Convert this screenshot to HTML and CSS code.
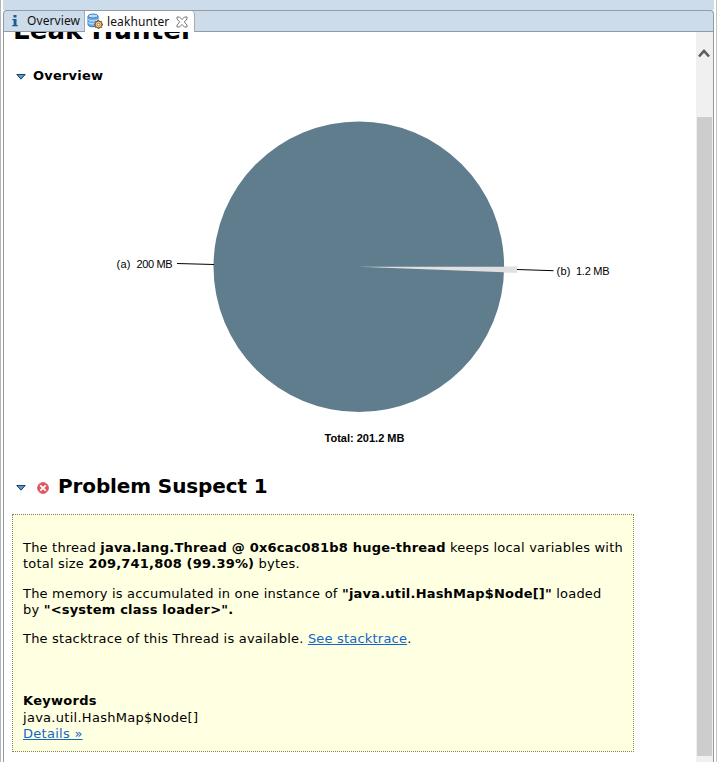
FILE: index.html
```
<!DOCTYPE html>
<html lang="en">
<head>
<meta charset="utf-8">
<title>leakhunter</title>
<link rel="stylesheet" href="styles.css">
</head>
<body>
<div class="workbench">
  <div class="toolstrip"></div>
  <div class="editor">
    <div class="tabs">
      <div class="tab">
        <svg class="info" width="8" height="14" viewBox="0 0 8 14"><path fill="#1c5c91" d="M2.500 1h3v2.400h-3zM1.300 5h4.200v6h1.300v1.200H1.200V11h1.400V6.200H1.300z"/></svg>
        <span class="tab-name first">Overview</span>
      </div>
      <div class="tab active">
        <svg class="db" width="17" height="17" viewBox="0 0 17 17">
          <path d="M1 3v8.500c0 3 10 3 10 0V3" fill="#6aaeea" stroke="#2d74bd"/>
          <ellipse cx="6" cy="3" rx="5" ry="2" fill="#b9dcfa" stroke="#3980c7"/>
          <path d="M1 6c0 2.500 10 2.500 10 0M1 9c0 2.500 10 2.500 10 0" fill="none" stroke="#d5eafb"/>
          <path d="M11.500 7v9M7 11.500h9M8.300 8.300l6.400 6.400M14.700 8.300l-6.400 6.400" stroke="#80561f" stroke-width="1.800"/>
          <circle cx="11.500" cy="11.500" r="3.300" fill="#f4d58c" stroke="#8a6027"/>
          <circle cx="11.500" cy="11.500" r="1.300" fill="#fff" stroke="#8a6027" stroke-width=".8"/>
        </svg>
        <span class="tab-name second">leakhunter</span>
        <svg class="close" width="12" height="12" viewBox="0 0 12 12"><path d="M1 1h2.500L6 3.500 8.500 1H11v2L8.300 6 11 9v2H8.500L6 8.500 3.500 11H1V9l2.700-3L1 3z" fill="#fff" stroke="#666" stroke-width=".9"/></svg>
      </div>
    </div>
    <div class="view">
      <div class="report">
        <h1><span>Leak Hunter</span></h1>
        <h2>
          <svg class="twisty" width="10" height="6" viewBox="0 0 10 6"><path d="M.8.500h8.400L5 5.200z" fill="#5b9bc9" stroke="#1d3f73"/></svg>
          <span>Overview</span>
        </h2>
        <svg class="chart" width="692" height="360" viewBox="4 95 692 360">
          <circle cx="358.800" cy="266.700" r="145.300" fill="#607d8e"/>
          <path d="M504 266.600h13v6h-13z" fill="#e0e0e0"/>
          <path d="M359 266.800L517 266.700V272.500L504 272.200z" fill="#e0e0e0"/>
          <path d="M177 263.500L214 264.500M517 269.500L553.500 270.700" stroke="#000" fill="none"/>
          <text x="116.500" y="268" textLength="14">(a)</text>
          <text x="136.500" y="268" textLength="36">200 MB</text>
          <text x="556.500" y="275" textLength="14">(b)</text>
          <text x="576" y="275" textLength="33.500">1.2 MB</text>
          <text class="total" x="324.500" y="442" textLength="80">Total: 201.2 MB</text>
        </svg>
        <h1 class="suspect">
          <svg class="twisty" width="10" height="6" viewBox="0 0 10 6"><path d="M.8.500h8.400L5 5.200z" fill="#5b9bc9" stroke="#1d3f73"/></svg>
          <svg class="error" width="12" height="12" viewBox="0 0 12 12"><circle cx="6" cy="6" r="5.400" fill="#e2545c" stroke="#d5606a"/><path d="M3.300 3.300l5.400 5.400M8.700 3.300L3.300 8.700" stroke="#fff" stroke-width="1.800"/></svg>
          <span>Problem Suspect 1</span>
        </h1>
        <div class="important">
          <p>The thread <b>java.lang.Thread @ 0x6cac081b8 huge-thread</b> keeps local variables with<br>total size <b>209,741,808 (99.39%)</b> bytes.</p>
          <p>The memory is accumulated in one instance of <b>"java.util.HashMap$Node[]"</b> loaded<br>by <b>"&lt;system class loader&gt;".</b></p>
          <p>The stacktrace of this Thread is available. <a>See stacktrace</a>.</p>
          <div class="keywords"><b>Keywords</b><br>java.util.HashMap$Node[]<br><a>Details »</a></div>
        </div>
      </div>
      <div class="scrollbar">
        <svg width="12" height="10" viewBox="0 0 12 10"><path d="M1 8.500L6 3l5 5.500" fill="none" stroke="#5c5c5c" stroke-width="2.600"/></svg>
        <div class="thumb"></div>
      </div>
    </div>
  </div>
</div>
</body>
</html>
```
FILE: styles.css
```
* { box-sizing: border-box; }
body { margin: 0; background: #fff; overflow: hidden; }
.workbench {
  width: 717px; height: 762px; padding: 0 2px;
  border-left: 1px solid #b5b5b5; border-right: 1px solid #c4c4c4;
  overflow: hidden;
}
.toolstrip { height: 10px; background: #cddcea; }
.editor {
  height: 760px; border: 1px solid #949ba3; border-bottom: 0;
  border-radius: 4px 4px 0 0; background: #cddcea; overflow: hidden;
}
.tabs { display: flex; height: 21px; border-bottom: 1px solid #949ba3; font: 12px/16px "Noto Sans", sans-serif; color: #111; }
.tab { display: flex; align-items: center; width: 81px; height: 20px; padding-left: 7px; border-right: 1px solid #a4abb3; }
.tab.active { width: 110px; height: 21px; padding-left: 2px; background: #fff; border-radius: 0 4px 0 0; }
.info { margin-right: 8px; }
.tab-name { white-space: nowrap; letter-spacing: .1px; }
.db { margin-right: 3px; flex: none; }
.close { margin-left: 7px; flex: none; }
.view { display: flex; height: 739px; background: #fff; }
.report { width: 692px; flex: none; overflow: hidden; font: 13px/16px "DejaVu Sans", sans-serif; color: #000; }
h1, h2, p { margin: 0; }
h1 { height: 24px; margin-top: -14px; padding-left: 9px; font-size: 26px; line-height: 25px; letter-spacing: .1px; white-space: nowrap; }
h2 { display: flex; align-items: center; height: 16px; margin-top: 26px; padding-left: 12px; font-size: 13px; line-height: 16px; letter-spacing: .2px; }
.twisty { flex: none; margin-top: 2px; }
h2 span { margin-left: 7px; }
.chart { display: block; margin-top: 11px; font: 11px "Liberation Sans", sans-serif; }
.total { font-weight: bold; }
.suspect { display: flex; align-items: center; height: 26px; margin-top: 18px; padding-left: 12px; font-size: 20px; letter-spacing: -.12px; }
.suspect .twisty { margin-top: 4px; }
.error { margin: 3px 9px 0 11px; flex: none; }
.important {
  width: 622px; height: 238px; margin: 15px 0 0 8px; padding: 25px 10px 0;
  border: 1px dotted #85855c; background: #ffffe1; white-space: nowrap; letter-spacing: .2px;
}
.important p { margin-bottom: 13px; }
.important p:first-child { margin-bottom: 14px; }
.keywords { margin-top: 46px; line-height: 16.500px; letter-spacing: .28px; }
a { color: #0f66cc; text-decoration: underline; }
.scrollbar { width: 17px; padding-top: 16px; background: #f0f0f0; }
.scrollbar svg { display: block; margin-left: 2px; }
.thumb { width: 15px; height: 639px; margin: 59px 0 0 1px; background: #cdcdcd; }
```
